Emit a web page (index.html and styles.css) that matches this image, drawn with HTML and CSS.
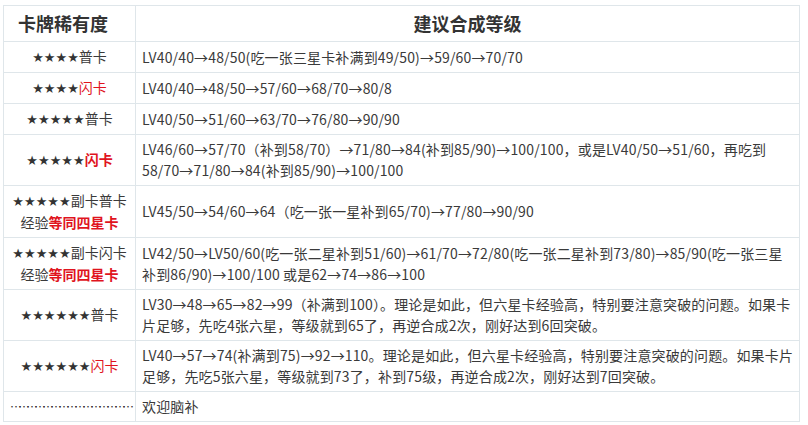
FILE: index.html
```html
<!DOCTYPE html>
<html lang="zh-CN">
<head>
<meta charset="utf-8">
<title>卡牌合成等级</title>
<link rel="stylesheet" href="styles.css">
</head>
<body>
<div class="wrap">
<table class="tbl">
  <colgroup><col class="c1"><col class="c2"></colgroup>
  <thead>
    <tr><th class="h1">卡牌稀有度</th><th class="h2">建议合成等级</th></tr>
  </thead>
  <tbody>
    <tr><td class="rar"><span class="st">★★★★</span>普卡</td><td class="adv">LV40/40→48/50(吃一张三星卡补满到49/50)→59/60→70/70</td></tr>
    <tr><td class="rar"><span class="st">★★★★</span><span class="red">闪卡</span></td><td class="adv">LV40/40→48/50→57/60→68/70→80/8</td></tr>
    <tr><td class="rar"><span class="st">★★★★★</span>普卡</td><td class="adv">LV40/50→51/60→63/70→76/80→90/90</td></tr>
    <tr><td class="rar"><span class="st">★★★★★</span><span class="red b">闪卡</span></td><td class="adv">LV46/60→57/70（补到58/70）→71/80→84(补到85/90)→100/100，或是LV40/50→51/60，再吃到<br>58/70→71/80→84(补到85/90)→100/100</td></tr>
    <tr><td class="rar"><span class="st">★★★★★</span>副卡普卡<br>经验<span class="red b">等同四星卡</span></td><td class="adv">LV45/50→54/60→64（吃一张一星补到65/70)→77/80→90/90</td></tr>
    <tr><td class="rar"><span class="st">★★★★★</span>副卡闪卡<br>经验<span class="red b">等同四星卡</span></td><td class="adv">LV42/50→LV50/60(吃一张二星补到51/60)→61/70→72/80(吃一张二星补到73/80)→85/90(吃一张三星<br>补到86/90)→100/100 或是62→74→86→100</td></tr>
    <tr><td class="rar"><span class="st">★★★★★★</span>普卡</td><td class="adv">LV30→48→65→82→99（补满到100）。理论是如此，但六星卡经验高，特别要注意突破的问题。如果卡<br>片足够，先吃4张六星，等级就到65了，再逆合成2次，刚好达到6回突破。</td></tr>
    <tr><td class="rar"><span class="st">★★★★★★</span><span class="red">闪卡</span></td><td class="adv">LV40→57→74(补满到75)→92→110。理论是如此，但六星卡经验高，特别要注意突破的问题。如果卡片<br>足够，先吃5张六星，等级就到73了，补到75级，再逆合成2次，刚好达到7回突破。</td></tr>
    <tr><td class="rar dots">………………………………………</td><td class="adv">欢迎脑补</td></tr>
  </tbody>
</table>
</div>
</body>
</html>
```
FILE: styles.css
```css
html, body {
  margin: 0;
  padding: 0;
  background: #fff;
}
.wrap {
  padding: 5px 0 0 3px;
}
.tbl {
  width: 797px;
  border-collapse: collapse;
  font-family: "Noto Sans CJK SC", "Noto Sans", sans-serif;
  font-size: 14px;
  color: #3a3a3a;
  table-layout: fixed;
}
.c1 { width: 132px; }
.tbl th, .tbl td {
  border: 1px solid #dfe6ea;
  line-height: 21px;
  padding: 4px 6px;
  vertical-align: middle;
}
.tbl th {
  font-size: 18px;
  font-weight: bold;
  color: #333;
  height: 27px;
  padding: 4px 6px;
}
.h1 {
  text-align: left;
  padding-left: 14px !important;
}
.h2 {
  text-align: center;
}
.rar {
  text-align: center;
  padding: 4px 2px;
  white-space: nowrap;
}
.adv {
  text-align: left;
  padding-left: 5px;
  white-space: nowrap;
  letter-spacing: 0.15px;
}
.st {
  font-family: "DejaVu Sans", sans-serif;
  font-size: 13px;
  color: #333;
}
.red {
  color: #e0141e;
}
.b {
  font-weight: bold;
}
.dots {
  font-size: 12px;
  letter-spacing: -4px;
  color: #333;
}
```
